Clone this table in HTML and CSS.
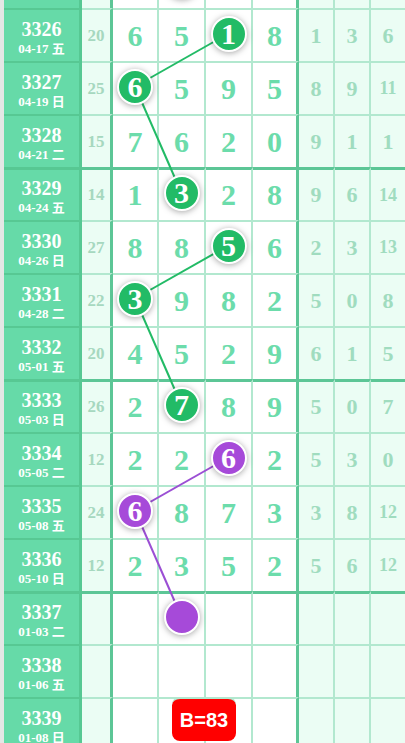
FILE: index.html
```html
<!DOCTYPE html>
<html lang="zh">
<head>
<meta charset="utf-8">
<title>走势图</title>
<link rel="stylesheet" href="styles.css">
</head>
<body>
<div class="board">
  <svg class="links" width="405" height="795" viewBox="0 0 405 795">
    <g stroke="#22bb66" stroke-width="2" fill="none">
      <line x1="228.5" y1="78.5" x2="135" y2="131.5"/>
      <line x1="135" y1="131.5" x2="181.5" y2="238"/>
      <line x1="228.5" y1="290.5" x2="135" y2="343.5"/>
      <line x1="135" y1="343.5" x2="181.5" y2="450"/>
    </g>
    <g stroke="#9b4fd4" stroke-width="2" fill="none">
      <line x1="228.5" y1="502.5" x2="135" y2="555.5"/>
      <line x1="135" y1="555.5" x2="181.5" y2="662"/>
    </g>
  </svg>

  <div class="row grp">
    <div class="strip"></div>
    <div class="date"></div>
    <div class="sum"></div>
    <div class="d"></div><div class="d"><span class="ball g"></span></div><div class="d"></div><div class="d last"></div>
    <div class="r"></div><div class="r"></div><div class="r end"></div>
  </div>
  <div class="row">
    <div class="strip"></div>
    <div class="date"><b>3326</b><span>04-17 五</span></div>
    <div class="sum">20</div>
    <div class="d">6</div><div class="d">5</div><div class="d"><span class="ball g">1</span></div><div class="d last">8</div>
    <div class="r">1</div><div class="r">3</div><div class="r end">6</div>
  </div>
  <div class="row">
    <div class="strip"></div>
    <div class="date"><b>3327</b><span>04-19 日</span></div>
    <div class="sum">25</div>
    <div class="d"><span class="ball g">6</span></div><div class="d">5</div><div class="d">9</div><div class="d last">5</div>
    <div class="r">8</div><div class="r">9</div><div class="r end sm">11</div>
  </div>
  <div class="row">
    <div class="strip"></div>
    <div class="date"><b>3328</b><span>04-21 二</span></div>
    <div class="sum">15</div>
    <div class="d">7</div><div class="d">6</div><div class="d">2</div><div class="d last">0</div>
    <div class="r">9</div><div class="r">1</div><div class="r end">1</div>
  </div>
  <div class="row grp">
    <div class="strip"></div>
    <div class="date"><b>3329</b><span>04-24 五</span></div>
    <div class="sum">14</div>
    <div class="d">1</div><div class="d"><span class="ball g">3</span></div><div class="d">2</div><div class="d last">8</div>
    <div class="r">9</div><div class="r">6</div><div class="r end sm">14</div>
  </div>
  <div class="row">
    <div class="strip"></div>
    <div class="date"><b>3330</b><span>04-26 日</span></div>
    <div class="sum">27</div>
    <div class="d">8</div><div class="d">8</div><div class="d"><span class="ball g">5</span></div><div class="d last">6</div>
    <div class="r">2</div><div class="r">3</div><div class="r end sm">13</div>
  </div>
  <div class="row">
    <div class="strip"></div>
    <div class="date"><b>3331</b><span>04-28 二</span></div>
    <div class="sum">22</div>
    <div class="d"><span class="ball g">3</span></div><div class="d">9</div><div class="d">8</div><div class="d last">2</div>
    <div class="r">5</div><div class="r">0</div><div class="r end">8</div>
  </div>
  <div class="row">
    <div class="strip"></div>
    <div class="date"><b>3332</b><span>05-01 五</span></div>
    <div class="sum">20</div>
    <div class="d">4</div><div class="d">5</div><div class="d">2</div><div class="d last">9</div>
    <div class="r">6</div><div class="r">1</div><div class="r end">5</div>
  </div>
  <div class="row grp">
    <div class="strip"></div>
    <div class="date"><b>3333</b><span>05-03 日</span></div>
    <div class="sum">26</div>
    <div class="d">2</div><div class="d"><span class="ball g">7</span></div><div class="d">8</div><div class="d last">9</div>
    <div class="r">5</div><div class="r">0</div><div class="r end">7</div>
  </div>
  <div class="row">
    <div class="strip"></div>
    <div class="date"><b>3334</b><span>05-05 二</span></div>
    <div class="sum">12</div>
    <div class="d">2</div><div class="d">2</div><div class="d"><span class="ball p">6</span></div><div class="d last">2</div>
    <div class="r">5</div><div class="r">3</div><div class="r end">0</div>
  </div>
  <div class="row">
    <div class="strip"></div>
    <div class="date"><b>3335</b><span>05-08 五</span></div>
    <div class="sum">24</div>
    <div class="d"><span class="ball p">6</span></div><div class="d">8</div><div class="d">7</div><div class="d last">3</div>
    <div class="r">3</div><div class="r">8</div><div class="r end sm">12</div>
  </div>
  <div class="row">
    <div class="strip"></div>
    <div class="date"><b>3336</b><span>05-10 日</span></div>
    <div class="sum">12</div>
    <div class="d">2</div><div class="d">3</div><div class="d">5</div><div class="d last">2</div>
    <div class="r">5</div><div class="r">6</div><div class="r end sm">12</div>
  </div>
  <div class="row grp">
    <div class="strip"></div>
    <div class="date"><b>3337</b><span>01-03 二</span></div>
    <div class="sum"></div>
    <div class="d"></div><div class="d"><span class="ball p"></span></div><div class="d"></div><div class="d last"></div>
    <div class="r"></div><div class="r"></div><div class="r end"></div>
  </div>
  <div class="row">
    <div class="strip"></div>
    <div class="date"><b>3338</b><span>01-06 五</span></div>
    <div class="sum"></div>
    <div class="d"></div><div class="d"></div><div class="d"></div><div class="d last"></div>
    <div class="r"></div><div class="r"></div><div class="r end"></div>
  </div>
  <div class="row has-badge">
    <div class="strip"></div>
    <div class="date"><b>3339</b><span>01-08 日</span></div>
    <div class="sum"></div>
    <div class="d"></div><div class="d"></div><div class="d"></div><div class="d last"></div>
    <div class="r"></div><div class="r"></div><div class="r end"></div>
    <div class="badge">B=83</div>
  </div>
</div>
</body>
</html>
```

FILE: styles.css
```css
* { box-sizing: border-box; }

body {
  margin: 0;
  background: #ffffff;
  font-family: "Liberation Serif", "Noto Sans CJK SC", serif;
  overflow: hidden;
}

.board {
  position: relative;
  width: 405px;
  margin-top: -45px;
}

.links {
  position: absolute;
  top: 0;
  left: 0;
  z-index: 1;
  pointer-events: none;
}

.row {
  display: grid;
  grid-template-columns: 4px 78px 31px 46px 47px 47px 46px 36px 36px 34px;
  height: 53px;
}

.row.has-badge { position: relative; }

.row > div {
  border-top: 2px solid #b2e8cf;
  display: flex;
  align-items: center;
  justify-content: center;
  font-weight: bold;
}

.row.grp > div {
  border-top: 3px solid #5cc696;
}

.row > div.strip {
  background: #e4e7e5;
  border-top-color: #e4e7e5;
}

.row > div.date {
  background: #66daa8;
  border-top-color: #57c893;
  border-right: 3px solid #57c893;
  flex-direction: column;
  color: #ffffff;
  padding-top: 3px;
}

.date b {
  font-size: 20px;
  line-height: 22px;
}

.date span {
  font-size: 13px;
  line-height: 17px;
  font-family: "Liberation Serif", "Noto Sans CJK SC", serif;
  font-weight: bold;
}

.sum {
  background: #ebfdf4;
  color: #a6d8bf;
  font-size: 17px;
  border-right: 3px solid #5cc696;
}

.d {
  background: #ffffff;
  color: #6cdcab;
  font-size: 30px;
  border-right: 2px solid #b2e8cf;
}

.d.last { border-right: 3px solid #5cc696; }

.r {
  background: #ebfdf4;
  color: #a0dcbf;
  font-size: 22px;
  border-right: 2px solid #b2e8cf;
}

.r.end { border-right: 0; }
.r.sm { font-size: 18px; }

.ball {
  position: relative;
  z-index: 2;
  width: 36px;
  height: 36px;
  border-radius: 50%;
  border: 2px solid #ffffff;
  box-shadow: 0 1px 6px rgba(0, 0, 0, 0.35);
  color: #ffffff;
  display: flex;
  align-items: center;
  justify-content: center;
  font-size: 30px;
  line-height: 1;
  transform: translateY(-2px);
}

.g { background: #22bb66; }
.p { background: #a64ad9; }

.badge {
  position: absolute;
  left: 172px;
  top: 0;
  z-index: 3;
  width: 64px;
  height: 44px;
  border-radius: 8px;
  background: #ff0000;
  color: #ffffff;
  font-family: "Liberation Sans", sans-serif;
  font-weight: bold;
  font-size: 20px;
  display: flex;
  align-items: center;
  justify-content: center;
}
```
